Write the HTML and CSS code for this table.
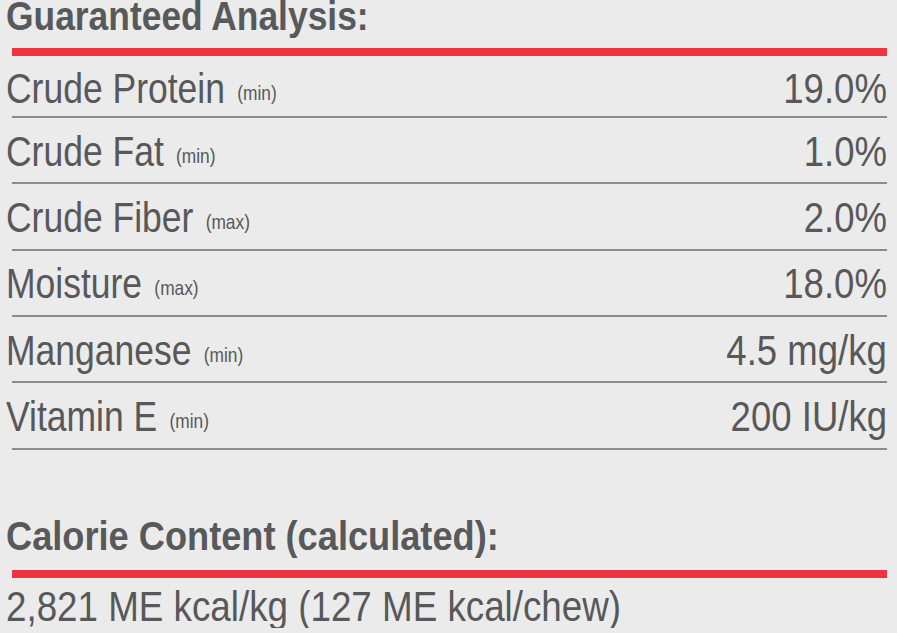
FILE: index.html
```html
<!DOCTYPE html>
<html lang="en">
<head>
<meta charset="utf-8">
<title>Guaranteed Analysis</title>
<link rel="stylesheet" href="styles.css">
</head>
<body>
<main class="panel">
  <h2 class="section-title"><span class="squeeze-title">Guaranteed Analysis:</span></h2>
  <div class="red-rule"></div>
  <ul class="analysis">
    <li class="row"><span class="label">Crude Protein <small class="qual">(min)</small></span><span class="value">19.0%</span></li>
    <li class="row"><span class="label">Crude Fat <small class="qual">(min)</small></span><span class="value">1.0%</span></li>
    <li class="row"><span class="label">Crude Fiber <small class="qual">(max)</small></span><span class="value">2.0%</span></li>
    <li class="row"><span class="label">Moisture <small class="qual">(max)</small></span><span class="value">18.0%</span></li>
    <li class="row"><span class="label">Manganese <small class="qual">(min)</small></span><span class="value">4.5 mg/kg</span></li>
    <li class="row"><span class="label">Vitamin E <small class="qual">(min)</small></span><span class="value">200 IU/kg</span></li>
  </ul>
  <h2 class="section-title calorie-title"><span class="squeeze-title wide">Calorie Content (calculated):</span></h2>
  <div class="red-rule calorie-rule"></div>
  <p class="calorie"><span class="squeeze-text">2,821 ME kcal/kg (127 ME kcal/chew)</span></p>
</main>
</body>
</html>
```

FILE: styles.css
```css
html, body {
  margin: 0;
  padding: 0;
  background: #ebebeb;
}

body {
  font-family: "Liberation Sans", Arial, sans-serif;
  color: #58585a;
  overflow: hidden;
}

.panel {
  padding: 0 10px 0 6px;
}

.section-title {
  margin: 0;
  font-size: 40px;
  line-height: 33px;
  font-weight: 700;
  color: #58595b;
  white-space: nowrap;
}

.squeeze-title {
  display: inline-block;
  transform: scaleX(0.885);
  transform-origin: left center;
}

.squeeze-title.wide {
  transform: scaleX(0.905);
}

.red-rule {
  margin: 15px 0 0 6px;
  height: 8px;
  background: #ee3341;
}

.analysis {
  list-style: none;
  margin: 0 0 0 6px;
  padding: 0;
}

.row {
  display: flex;
  justify-content: space-between;
  align-items: baseline;
  font-size: 43px;
  line-height: 43px;
  padding: 11.7px 0 9.7px;
  border-bottom: 2px solid #8c8c8c;
}

.row:first-child {
  padding-top: 10.9px;
  padding-bottom: 6.1px;
}

.label {
  display: inline-block;
  margin-left: -6px;
  white-space: nowrap;
  transform: scaleX(0.825);
  transform-origin: left center;
}

.qual {
  font-size: 21px;
  line-height: 1;
  margin-left: 3px;
  position: relative;
  top: -3px;
}

.value {
  display: inline-block;
  white-space: nowrap;
  transform: scaleX(0.85);
  transform-origin: right center;
}

.calorie-title {
  margin-top: 70px;
}

.calorie-rule {
  margin-top: 17px;
}

.calorie {
  margin: 7.3px 0 0;
  font-size: 43px;
  line-height: 43px;
  white-space: nowrap;
}

.squeeze-text {
  display: inline-block;
  transform: scaleX(0.855);
  transform-origin: left center;
}
```
